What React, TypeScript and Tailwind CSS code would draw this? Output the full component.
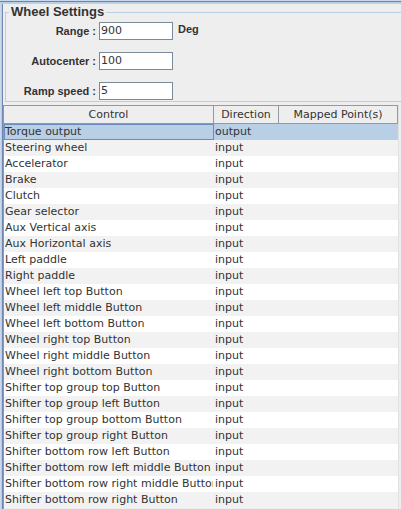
const rows = [
  ["Torque output", "output"],
  ["Steering wheel", "input"],
  ["Accelerator", "input"],
  ["Brake", "input"],
  ["Clutch", "input"],
  ["Gear selector", "input"],
  ["Aux Vertical axis", "input"],
  ["Aux Horizontal axis", "input"],
  ["Left paddle", "input"],
  ["Right paddle", "input"],
  ["Wheel left top Button", "input"],
  ["Wheel left middle Button", "input"],
  ["Wheel left bottom Button", "input"],
  ["Wheel right top Button", "input"],
  ["Wheel right middle Button", "input"],
  ["Wheel right bottom Button", "input"],
  ["Shifter top group top Button", "input"],
  ["Shifter top group left Button", "input"],
  ["Shifter top group bottom Button", "input"],
  ["Shifter top group right Button", "input"],
  ["Shifter bottom row left Button", "input"],
  ["Shifter bottom row left middle Button", "input"],
  ["Shifter bottom row right middle Button", "input"],
  ["Shifter bottom row right Button", "input"],
];

const fields = [
  { label: "Range :", value: "900", unit: "Deg" },
  { label: "Autocenter :", value: "100" },
  { label: "Ramp speed :", value: "5" },
];

export default function App() {
  return (
    <div className="flex h-[509px] w-[401px] flex-col overflow-hidden bg-[#eeeeee] font-['DejaVu_Sans',sans-serif] text-[11px] text-[#333333]">
      {/* top edge */}
      <div className="h-px shrink-0 bg-[#c9d9eb]" />
      <div className="h-px shrink-0 bg-[#6382bf]" />
      <div className="h-[2px] shrink-0 bg-[#b8cfe5]" />

      <div className="flex min-h-0 flex-1">
        {/* left edge */}
        <div className="flex w-[3px] shrink-0">
          <div className="w-px bg-[#c9d9eb]" />
          <div className="w-px bg-[#b8cfe5]" />
          <div className="w-px bg-[#6f88b3]" />
        </div>

        <div className="flex min-w-0 flex-1 flex-col">
          {/* Wheel Settings */}
          <div className="relative ml-[2px] mt-[8px] h-[90px] w-[400px] shrink-0 border-y border-l border-[#b8cfe5] pt-[9px]">
            <span className="absolute left-[3px] top-[-9px] bg-[#eeeeee] px-[2px] font-['Liberation_Sans',sans-serif] text-[13px] font-bold leading-[15px] text-[#333333]">
              Wheel Settings
            </span>
            <div className="grid grid-cols-[90px_74px_auto] gap-x-[3px] gap-y-[12px]">
              {fields.map((f) => (
                <div key={f.label} className="contents">
                  <div className="flex h-[18px] items-center justify-end font-['Liberation_Sans',sans-serif] text-[11px] font-bold">
                    {f.label}
                  </div>
                  <div className="flex h-[18px] items-center border border-[#7a8a99] bg-white pl-[1px] text-[11px] leading-[14px]">
                    {f.value}
                  </div>
                  <div className="ml-[2px] flex h-[14px] items-center font-['Liberation_Sans',sans-serif] text-[11px] font-bold">
                    {f.unit ?? ""}
                  </div>
                </div>
              ))}
            </div>
          </div>

          {/* table */}
          <div className="mt-[3px] flex min-h-0 flex-1">
            <div className="flex min-w-0 flex-col border-l border-[#8a9bb0]">
              <div className="flex h-[19px] shrink-0 border-y border-[#8f9aa5] bg-[#eeeeee] leading-[17px]">
                <div className="w-[210px] border-r border-[#8f9aa5] text-center">Control</div>
                <div className="w-[65px] border-r border-[#8f9aa5] text-center">Direction</div>
                <div className="w-[119px] border-r border-[#8f9aa5] text-center">Mapped Point(s)</div>
              </div>
              {rows.map(([name, dir], i) => (
                <div
                  key={name}
                  className={
                    i === 0
                      ? "flex h-[16px] shrink-0 bg-[#b8cfe5] leading-[14px]"
                      : i % 2 === 1
                        ? "flex h-[16px] shrink-0 bg-[#f2f2f2] leading-[14px]"
                        : "flex h-[16px] shrink-0 bg-white leading-[14px]"
                  }
                >
                  <div
                    className={
                      i === 0
                        ? "w-[210px] overflow-hidden whitespace-nowrap border border-[#6c8cc0]"
                        : "w-[210px] overflow-hidden whitespace-nowrap border border-transparent"
                    }
                  >
                    {name}
                  </div>
                  <div className="w-[65px] overflow-hidden whitespace-nowrap border border-transparent">{dir}</div>
                  <div className="w-[119px] border border-transparent" />
                </div>
              ))}
            </div>
            <div className="w-[3px] shrink-0 border-l border-[#e0e0e0] bg-[#eeeeee]" />
          </div>
        </div>
      </div>
    </div>
  );
}
